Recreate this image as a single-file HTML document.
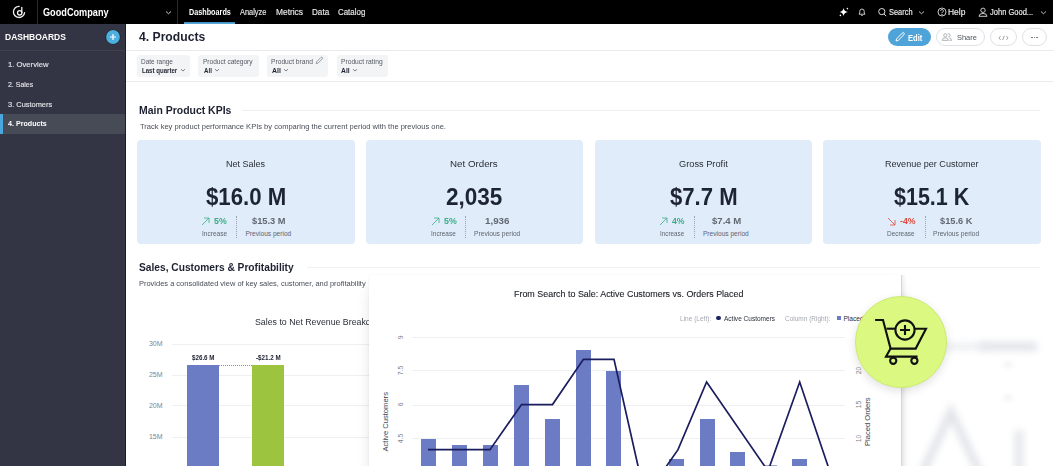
<!DOCTYPE html>
<html><head><meta charset="utf-8"><style>
html,body{margin:0;padding:0;background:#fff;}
#root{position:relative;width:1053px;height:466px;overflow:hidden;font-family:"Liberation Sans", sans-serif;}
.t{position:absolute;white-space:nowrap;line-height:1;transform-origin:0 0;}
.r{position:absolute;}
</style></head><body><div id="root">
<div class="r" style="left:0px;top:0px;width:1053px;height:24px;background:#000;"></div>
<div class="r" style="left:37px;top:0px;width:1px;height:24px;background:#2b2b2b;"></div>
<div class="r" style="left:177px;top:0px;width:1px;height:24px;background:#2b2b2b;"></div>
<svg class="r" style="left:0;top:0" width="40" height="24" viewBox="0 0 40 24" fill="none" stroke="#f2f2f2" stroke-width="1.3" stroke-linecap="round">
<path d="M19.2 6.3 A5.6 5.6 0 1 0 24.6 12.6"/><circle cx="19.7" cy="12.8" r="2.2"/><path d="M21.8 7.4 V12.4"/></svg>
<div class="t" style="left:42.93px;top:7.54px;font-size:10.00px;font-weight:700;color:#fff;transform:scaleX(0.9157);">GoodCompany</div>
<svg class="r" style="left:164.9px;top:8.5px" width="7" height="7" viewBox="0 0 7 7"><path d="M1 2.5 L3.5 4.75 L6 2.5" fill="none" stroke="#ccc" stroke-width="1"/></svg>
<div class="t" style="left:188.52px;top:8.02px;font-size:8.60px;font-weight:700;color:#fff;transform:scaleX(0.8423);">Dashboards</div>
<div class="r" style="left:184px;top:22px;width:51px;height:2px;background:linear-gradient(#3a85b8,#62b3e3);"></div>
<div class="t" style="left:239.99px;top:8.02px;font-size:8.60px;font-weight:400;color:#e8e8e8;transform:scaleX(0.8608);-webkit-text-stroke:0.15px currentColor;">Analyze</div>
<div class="t" style="left:275.91px;top:8.02px;font-size:8.60px;font-weight:400;color:#e8e8e8;transform:scaleX(0.9740);-webkit-text-stroke:0.15px currentColor;">Metrics</div>
<div class="t" style="left:311.83px;top:8.02px;font-size:8.60px;font-weight:400;color:#e8e8e8;transform:scaleX(0.9451);-webkit-text-stroke:0.15px currentColor;">Data</div>
<div class="t" style="left:338.20px;top:8.02px;font-size:8.60px;font-weight:400;color:#e8e8e8;transform:scaleX(0.9213);-webkit-text-stroke:0.15px currentColor;">Catalog</div>
<svg class="r" style="left:836px;top:4px" width="16" height="16" viewBox="836 4 16 16"><path d="M843.5 8 Q844.1 11.4 847.9 12 Q844.1 12.6 843.5 16 Q842.9 12.6 839.6 12 Q842.9 11.4 843.5 8Z" fill="#fff"/><circle cx="847.4" cy="8.6" r="0.8" fill="#fff"/><circle cx="840.4" cy="15.4" r="0.8" fill="#fff"/></svg>
<svg class="r" style="left:857px;top:7px" width="10" height="10" viewBox="0 0 10 10" fill="none" stroke="#ddd" stroke-width="0.9"><path d="M2 7.2 H8 L7.2 6 V4.2 A2.2 2.2 0 0 0 2.8 4.2 V6 Z"/><path d="M4.2 8.4 H5.8"/></svg>
<svg class="r" style="left:877px;top:7px" width="11" height="11" viewBox="0 0 11 11" fill="none" stroke="#ddd" stroke-width="1"><circle cx="4.8" cy="4.6" r="3.1"/><path d="M7 6.9 L9.2 9.2"/></svg>
<div class="t" style="left:888.96px;top:8.02px;font-size:8.60px;font-weight:400;color:#eee;transform:scaleX(0.8632);-webkit-text-stroke:0.15px currentColor;">Search</div>
<svg class="r" style="left:918.0px;top:8.5px" width="7" height="7" viewBox="0 0 7 7"><path d="M1 2.5 L3.5 4.75 L6 2.5" fill="none" stroke="#bbb" stroke-width="1"/></svg>
<svg class="r" style="left:937px;top:7px" width="10" height="10" viewBox="0 0 10 10" fill="none" stroke="#ddd" stroke-width="0.9"><circle cx="5" cy="5" r="4"/><path d="M3.6 3.9 A1.4 1.4 0 1 1 5.4 5.2 Q5 5.4 5 6.1"/><circle cx="5" cy="7.5" r="0.3" fill="#ddd"/></svg>
<div class="t" style="left:947.91px;top:8.02px;font-size:8.60px;font-weight:400;color:#eee;transform:scaleX(0.9810);-webkit-text-stroke:0.15px currentColor;">Help</div>
<svg class="r" style="left:978px;top:7px" width="10" height="10" viewBox="0 0 10 10" fill="none" stroke="#ddd" stroke-width="0.9"><circle cx="5" cy="3.3" r="2.2"/><path d="M1 9.3 Q1 6.4 5 6.4 Q9 6.4 9 9.3 Z"/></svg>
<div class="t" style="left:989.78px;top:8.02px;font-size:8.60px;font-weight:400;color:#eee;transform:scaleX(0.8755);-webkit-text-stroke:0.15px currentColor;">John Good...</div>
<svg class="r" style="left:1039.5px;top:8.5px" width="7" height="7" viewBox="0 0 7 7"><path d="M1 2.5 L3.5 4.75 L6 2.5" fill="none" stroke="#bbb" stroke-width="1"/></svg>
<div class="r" style="left:0px;top:24px;width:126px;height:442px;background:#333544;"></div>
<div class="r" style="left:0px;top:50px;width:125px;height:1px;background:#3f424c;"></div>
<div class="r" style="left:125px;top:24px;width:1px;height:442px;background:#1c1e24;"></div>
<div class="t" style="left:4.54px;top:33.24px;font-size:8.70px;font-weight:700;color:#fff;transform:scaleX(0.9766);">DASHBOARDS</div>
<svg class="r" style="left:105px;top:29px" width="16" height="16" viewBox="0 0 16 16"><circle cx="8" cy="8" r="7.6" fill="#1f222b"/><circle cx="8" cy="8" r="6.9" fill="#4eaede"/><path d="M8 5 V11 M5 8 H11" stroke="#fff" stroke-width="1.2"/></svg>
<div class="t" style="left:7.82px;top:61.11px;font-size:7.90px;font-weight:400;color:#e0e2e6;transform:scaleX(0.9726);-webkit-text-stroke:0.15px currentColor;">1. Overview</div>
<div class="t" style="left:8.05px;top:81.11px;font-size:7.90px;font-weight:400;color:#e0e2e6;transform:scaleX(0.8826);-webkit-text-stroke:0.15px currentColor;">2. Sales</div>
<div class="t" style="left:8.12px;top:100.51px;font-size:7.90px;font-weight:400;color:#e0e2e6;transform:scaleX(0.9420);-webkit-text-stroke:0.15px currentColor;">3. Customers</div>
<div class="r" style="left:0px;top:113.8px;width:125px;height:20.3px;background:#474b56;"></div>
<div class="r" style="left:0px;top:113.8px;width:3px;height:20.3px;background:#4aa6de;"></div>
<div class="t" style="left:8.30px;top:120.31px;font-size:7.90px;font-weight:700;color:#fff;transform:scaleX(0.9038);">4. Products</div>
<div class="r" style="left:126px;top:24px;width:927px;height:442px;background:#fff;"></div>
<div class="t" style="left:138.63px;top:31.16px;font-size:12.80px;font-weight:700;color:#1d2030;transform:scaleX(0.9505);">4. Products</div>
<div class="r" style="left:126px;top:50px;width:927px;height:1px;background:#e9eaee;"></div>
<div class="r" style="left:126px;top:81px;width:927px;height:1px;background:#e9eaee;"></div>
<div class="r" style="left:888px;top:28px;width:43px;height:18px;border-radius:9px;background:#4ea3d9"></div>
<svg class="r" style="left:894px;top:31px" width="12" height="12" viewBox="0 0 12 12" fill="none" stroke="#fff" stroke-width="1"><path d="M2 10 L2.6 7.8 L8.4 2 A1 1 0 0 1 10 3.6 L4.2 9.4 Z"/></svg>
<div class="t" style="left:908.20px;top:33.79px;font-size:8.40px;font-weight:700;color:#fff;transform:scaleX(0.9001);">Edit</div>
<div class="r" style="left:936px;top:28px;width:48.6px;height:18px;border-radius:9px;border:1px solid #dfe1e5;box-sizing:border-box;background:#fff"></div>
<svg class="r" style="left:940px;top:32px" width="14" height="10" viewBox="940 32 14 10" fill="none" stroke="#9a9ea6" stroke-width="0.75"><circle cx="945.3" cy="35.4" r="1.6"/><path d="M942.3 40.4 Q942.3 37.8 945.3 37.8 Q948.3 37.8 948.3 40.4 Z"/><path d="M947.6 34 A1.6 1.6 0 1 1 948.2 36.9 M949.2 38 Q951.5 38.4 951.5 40.4 H949.6"/></svg>
<div class="t" style="left:956.56px;top:34.33px;font-size:8.00px;font-weight:400;color:#4d525b;transform:scaleX(0.9310);">Share</div>
<div class="r" style="left:990px;top:28px;width:27px;height:18px;border-radius:9px;border:1px solid #dfe1e5;box-sizing:border-box;background:#fff"></div>
<svg class="r" style="left:996px;top:33px" width="14" height="8" viewBox="996 33 14 8" fill="none" stroke="#7d828b" stroke-width="0.75"><path d="M1000.6 36 L999 37.9 L1000.6 39.8 M1006.4 36 L1008 37.9 L1006.4 39.8 M1004.3 35.8 L1002.7 40"/></svg>
<div class="r" style="left:1022px;top:28px;width:25px;height:18px;border-radius:9px;border:1px solid #dfe1e5;box-sizing:border-box;background:#fff"></div>
<div class="r" style="left:1031.2px;top:36.9px;width:1.5px;height:1.5px;border-radius:1px;background:#666"></div>
<div class="r" style="left:1033.8px;top:36.9px;width:1.5px;height:1.5px;border-radius:1px;background:#666"></div>
<div class="r" style="left:1036.3999999999999px;top:36.9px;width:1.5px;height:1.5px;border-radius:1px;background:#666"></div>
<div class="r" style="left:137.3px;top:54.7px;width:53.1px;height:22px;border-radius:3px;background:#f3f4f6"></div>
<div class="r" style="left:198px;top:54.7px;width:60.5px;height:22px;border-radius:3px;background:#f3f4f6"></div>
<div class="r" style="left:267.3px;top:54.7px;width:60.5px;height:22px;border-radius:3px;background:#f3f4f6"></div>
<div class="r" style="left:337px;top:54.7px;width:50.7px;height:22px;border-radius:3px;background:#f3f4f6"></div>
<div class="t" style="left:141.37px;top:58.78px;font-size:6.40px;font-weight:400;color:#535862;transform:scaleX(1.0110);">Date range</div>
<div class="t" style="left:141.50px;top:67.78px;font-size:6.40px;font-weight:700;color:#1f2330;transform:scaleX(0.9543);">Last quarter</div>
<svg class="r" style="left:180.4px;top:66.7px" width="6" height="6" viewBox="0 0 6 6"><path d="M1 2.2 L3.0 4.0 L5 2.2" fill="none" stroke="#666" stroke-width="0.8"/></svg>
<div class="t" style="left:203.16px;top:58.78px;font-size:6.40px;font-weight:400;color:#535862;transform:scaleX(1.0262);">Product category</div>
<div class="t" style="left:203.54px;top:67.78px;font-size:6.40px;font-weight:700;color:#1f2330;transform:scaleX(0.9650);">All</div>
<svg class="r" style="left:214.4px;top:66.7px" width="6" height="6" viewBox="0 0 6 6"><path d="M1 2.2 L3.0 4.0 L5 2.2" fill="none" stroke="#666" stroke-width="0.8"/></svg>
<div class="t" style="left:271.45px;top:58.78px;font-size:6.40px;font-weight:400;color:#535862;transform:scaleX(1.0440);">Product brand</div>
<svg class="r" style="left:314px;top:55px" width="10" height="10" viewBox="314 55 10 10" fill="none" stroke="#7a7f88" stroke-width="0.75"><path d="M316.2 63.6 L316.6 61.8 L320.9 57.5 A0.95 0.95 0 0 1 322.3 58.9 L318 63.2 Z"/></svg>
<div class="t" style="left:271.82px;top:67.78px;font-size:6.40px;font-weight:700;color:#1f2330;transform:scaleX(1.0840);">All</div>
<svg class="r" style="left:282.8px;top:66.7px" width="6" height="6" viewBox="0 0 6 6"><path d="M1 2.2 L3.0 4.0 L5 2.2" fill="none" stroke="#666" stroke-width="0.8"/></svg>
<div class="t" style="left:340.85px;top:58.78px;font-size:6.40px;font-weight:400;color:#535862;transform:scaleX(1.0459);">Product rating</div>
<div class="t" style="left:341.22px;top:67.78px;font-size:6.40px;font-weight:700;color:#1f2330;transform:scaleX(1.0575);">All</div>
<svg class="r" style="left:352.0px;top:66.7px" width="6" height="6" viewBox="0 0 6 6"><path d="M1 2.2 L3.0 4.0 L5 2.2" fill="none" stroke="#666" stroke-width="0.8"/></svg>
<div class="t" style="left:139.01px;top:104.93px;font-size:10.60px;font-weight:700;color:#1d2030;transform:scaleX(0.9868);">Main Product KPIs</div>
<div class="r" style="left:242px;top:110px;width:798px;height:1px;background:#eceef1;"></div>
<div class="t" style="left:139.53px;top:122.81px;font-size:7.20px;font-weight:400;color:#484d57;transform:scaleX(1.0485);">Track key product performance KPIs by comparing the current period with the previous one.</div>
<div class="r" style="left:137px;top:140px;width:218px;height:103.5px;border-radius:4px;background:#e0ecf9"></div>
<div class="t" style="left:226.16px;top:160.31px;font-size:9.20px;font-weight:400;color:#2a2e37;transform:scaleX(0.9792);">Net Sales</div>
<div class="t" style="left:205.99px;top:185.56px;font-size:23.20px;font-weight:700;color:#1d2433;transform:scaleX(0.9592);">$16.0 M</div>
<div class="t" style="left:214.44px;top:217.21px;font-size:9.20px;font-weight:700;color:#37ad86;transform:scaleX(0.9554);">5%</div>
<svg class="r" style="left:201.3px;top:216.6px" width="9" height="9" viewBox="0 0 9 9" fill="none" stroke="#37ad86" stroke-width="0.8"><path d="M1 8 L8 1 M3 1 H8 V6"/></svg>
<div class="t" style="left:202.10px;top:230.61px;font-size:6.60px;font-weight:400;color:#5f6570;transform:scaleX(0.9910);">Increase</div>
<div class="r" style="left:236.20000000000002px;top:215.5px;width:0;height:22.5px;border-left:1px dotted #9aa3ae"></div>
<div class="t" style="left:251.87px;top:217.01px;font-size:9.20px;font-weight:700;color:#626873;transform:scaleX(1.0094);">$15.3 M</div>
<div class="t" style="left:245.46px;top:230.61px;font-size:6.60px;font-weight:400;color:#5f6570;">Previous period</div>
<div class="r" style="left:366px;top:140px;width:217px;height:103.5px;border-radius:4px;background:#e0ecf9"></div>
<div class="t" style="left:450.20px;top:160.31px;font-size:9.20px;font-weight:400;color:#2a2e37;transform:scaleX(1.0614);">Net Orders</div>
<div class="t" style="left:445.83px;top:185.56px;font-size:23.20px;font-weight:700;color:#1d2433;transform:scaleX(0.9716);">2,035</div>
<div class="t" style="left:444.04px;top:217.21px;font-size:9.20px;font-weight:700;color:#37ad86;transform:scaleX(0.9554);">5%</div>
<svg class="r" style="left:430.7px;top:216.6px" width="9" height="9" viewBox="0 0 9 9" fill="none" stroke="#37ad86" stroke-width="0.8"><path d="M1 8 L8 1 M3 1 H8 V6"/></svg>
<div class="t" style="left:431.06px;top:230.61px;font-size:6.60px;font-weight:400;color:#5f6570;transform:scaleX(0.9787);">Increase</div>
<div class="r" style="left:465.3px;top:215.5px;width:0;height:22.5px;border-left:1px dotted #9aa3ae"></div>
<div class="t" style="left:485.14px;top:217.01px;font-size:9.20px;font-weight:700;color:#626873;transform:scaleX(1.0625);">1,936</div>
<div class="t" style="left:474.05px;top:230.61px;font-size:6.60px;font-weight:400;color:#5f6570;transform:scaleX(1.0113);">Previous period</div>
<div class="r" style="left:595px;top:140px;width:217px;height:103.5px;border-radius:4px;background:#e0ecf9"></div>
<div class="t" style="left:678.79px;top:160.31px;font-size:9.20px;font-weight:400;color:#2a2e37;transform:scaleX(1.0054);">Gross Profit</div>
<div class="t" style="left:670.14px;top:185.56px;font-size:23.20px;font-weight:700;color:#1d2433;transform:scaleX(0.9545);">$7.7 M</div>
<div class="t" style="left:672.18px;top:217.21px;font-size:9.20px;font-weight:700;color:#37ad86;transform:scaleX(0.9445);">4%</div>
<svg class="r" style="left:658.5px;top:216.6px" width="9" height="9" viewBox="0 0 9 9" fill="none" stroke="#37ad86" stroke-width="0.8"><path d="M1 8 L8 1 M3 1 H8 V6"/></svg>
<div class="t" style="left:659.77px;top:230.61px;font-size:6.60px;font-weight:400;color:#5f6570;transform:scaleX(0.9541);">Increase</div>
<div class="r" style="left:694.3px;top:215.5px;width:0;height:22.5px;border-left:1px dotted #9aa3ae"></div>
<div class="t" style="left:711.67px;top:217.01px;font-size:9.20px;font-weight:700;color:#626873;transform:scaleX(1.0446);">$7.4 M</div>
<div class="t" style="left:702.96px;top:230.61px;font-size:6.60px;font-weight:400;color:#5f6570;">Previous period</div>
<div class="r" style="left:823px;top:140px;width:218px;height:103.5px;border-radius:4px;background:#e0ecf9"></div>
<div class="t" style="left:884.76px;top:160.31px;font-size:9.20px;font-weight:400;color:#2a2e37;transform:scaleX(0.9851);">Revenue per Customer</div>
<div class="t" style="left:894.40px;top:185.56px;font-size:23.20px;font-weight:700;color:#1d2433;transform:scaleX(0.9270);">$15.1 K</div>
<div class="t" style="left:900.07px;top:217.21px;font-size:9.20px;font-weight:700;color:#dc4a3d;transform:scaleX(0.9512);">-4%</div>
<svg class="r" style="left:886.7px;top:216.6px" width="9" height="9" viewBox="0 0 9 9" fill="none" stroke="#dc4a3d" stroke-width="0.8"><path d="M1 1 L8 8 M8 3 V8 H3"/></svg>
<div class="t" style="left:887.17px;top:230.61px;font-size:6.60px;font-weight:400;color:#5f6570;transform:scaleX(0.9775);">Decrease</div>
<div class="r" style="left:925.1999999999999px;top:215.5px;width:0;height:22.5px;border-left:1px dotted #9aa3ae"></div>
<div class="t" style="left:940.32px;top:217.01px;font-size:9.20px;font-weight:700;color:#626873;transform:scaleX(1.0032);">$15.6 K</div>
<div class="t" style="left:933.30px;top:230.61px;font-size:6.60px;font-weight:400;color:#5f6570;transform:scaleX(1.0091);">Previous period</div>
<div class="t" style="left:139.29px;top:261.63px;font-size:10.60px;font-weight:700;color:#1d2030;transform:scaleX(0.9625);">Sales, Customers &amp; Profitability</div>
<div class="r" style="left:307px;top:266.5px;width:733px;height:1px;background:#eef0f2;"></div>
<div class="t" style="left:138.99px;top:279.81px;font-size:7.20px;font-weight:400;color:#484d57;transform:scaleX(1.0390);">Provides a consolidated view of key sales, customer, and profitability</div>
<div class="t" style="left:254.50px;top:317.71px;font-size:9.20px;font-weight:400;color:#2a2e37;transform:scaleX(0.9558);">Sales to Net Revenue Breakdown</div>
<div class="r" style="left:172px;top:343.7px;width:200px;height:1px;background:#eeeff2;"></div>
<div class="t" style="left:148.95px;top:340.37px;font-size:7.00px;font-weight:400;color:#7f848d;">30M</div>
<div class="r" style="left:172px;top:374.6px;width:200px;height:1px;background:#eeeff2;"></div>
<div class="t" style="left:148.95px;top:371.27px;font-size:7.00px;font-weight:400;color:#7f848d;">25M</div>
<div class="r" style="left:172px;top:405.3px;width:200px;height:1px;background:#eeeff2;"></div>
<div class="t" style="left:148.95px;top:401.97px;font-size:7.00px;font-weight:400;color:#7f848d;">20M</div>
<div class="r" style="left:172px;top:436.5px;width:200px;height:1px;background:#eeeff2;"></div>
<div class="t" style="left:148.95px;top:433.17px;font-size:7.00px;font-weight:400;color:#7f848d;">15M</div>
<div class="r" style="left:186.7px;top:365px;width:32.1px;height:101px;background:#6b7bc4;"></div>
<div class="r" style="left:252px;top:365px;width:31.8px;height:101px;background:#9dc43f;"></div>
<div class="r" style="left:219px;top:364.5px;width:33px;height:0;border-top:1px dotted #8d929b"></div>
<div class="t" style="left:191.91px;top:355.18px;font-size:6.40px;font-weight:700;color:#1d2030;transform:scaleX(0.9732);">$26.6 M</div>
<div class="t" style="left:255.76px;top:355.18px;font-size:6.40px;font-weight:700;color:#1d2030;transform:scaleX(0.9761);">-$21.2 M</div>
<div class="r" style="left:369px;top:275px;width:532px;height:200px;background:#fff;box-shadow:0 10px 14px -3px rgba(0,0,0,0.16), 0 0 1px rgba(0,0,0,0.10)"></div>
<div class="t" style="left:514.07px;top:289.61px;font-size:9.20px;font-weight:400;color:#1c1f27;transform:scaleX(0.9703);-webkit-text-stroke:0.12px currentColor;">From Search to Sale: Active Customers vs. Orders Placed</div>
<div class="t" style="left:679.86px;top:315.51px;font-size:6.60px;font-weight:400;color:#a3a8b0;transform:scaleX(0.9901);">Line (Left):</div>
<div class="r" style="left:716px;top:315.7px;width:4.6px;height:4.6px;border-radius:50%;background:#1d2260"></div>
<div class="t" style="left:723.79px;top:315.51px;font-size:6.60px;font-weight:400;color:#2a2f3a;transform:scaleX(0.9890);">Active Customers</div>
<div class="t" style="left:785.38px;top:315.51px;font-size:6.60px;font-weight:400;color:#a3a8b0;transform:scaleX(0.9829);">Column (Right):</div>
<div class="r" style="left:836.5px;top:315.5px;width:4.5px;height:4.5px;background:#6b7bc4;"></div>
<div class="t" style="left:843.46px;top:315.51px;font-size:6.60px;font-weight:400;color:#2a2f3a;">Placed Orders</div>
<div class="r" style="left:412px;top:337.3px;width:433px;height:1px;background:#eeeff2;"></div>
<div class="r" style="left:412px;top:370.3px;width:433px;height:1px;background:#eeeff2;"></div>
<div class="r" style="left:412px;top:404.5px;width:433px;height:1px;background:#eeeff2;"></div>
<div class="r" style="left:412px;top:438.3px;width:433px;height:1px;background:#eeeff2;"></div>
<div class="r" style="left:764px;top:465px;width:13px;height:10px;background:#a3a8c8;"></div>
<div class="t" style="left:350.5px;top:333.90px;width:100px;text-align:center;font-size:6.8px;font-weight:400;color:#7f848d;transform-origin:50% 50%;transform:rotate(-90deg)">9</div>
<div class="t" style="left:350.5px;top:366.90px;width:100px;text-align:center;font-size:6.8px;font-weight:400;color:#7f848d;transform-origin:50% 50%;transform:rotate(-90deg)">7.5</div>
<div class="t" style="left:350.5px;top:401.10px;width:100px;text-align:center;font-size:6.8px;font-weight:400;color:#7f848d;transform-origin:50% 50%;transform:rotate(-90deg)">6</div>
<div class="t" style="left:350.5px;top:434.90px;width:100px;text-align:center;font-size:6.8px;font-weight:400;color:#7f848d;transform-origin:50% 50%;transform:rotate(-90deg)">4.5</div>
<div class="t" style="left:808.6px;top:366.90px;width:100px;text-align:center;font-size:6.8px;font-weight:400;color:#7f848d;transform-origin:50% 50%;transform:rotate(-90deg)">20</div>
<div class="t" style="left:808.6px;top:401.10px;width:100px;text-align:center;font-size:6.8px;font-weight:400;color:#7f848d;transform-origin:50% 50%;transform:rotate(-90deg)">15</div>
<div class="t" style="left:808.6px;top:434.90px;width:100px;text-align:center;font-size:6.8px;font-weight:400;color:#7f848d;transform-origin:50% 50%;transform:rotate(-90deg)">10</div>
<div class="t" style="left:335.7px;top:417.70px;width:100px;text-align:center;font-size:7.6px;font-weight:400;color:#3f444e;transform-origin:50% 50%;transform:rotate(-90deg)">Active Customers</div>
<div class="t" style="left:818.3px;top:417.90px;width:100px;text-align:center;font-size:7.6px;font-weight:400;color:#3f444e;transform-origin:50% 50%;transform:rotate(-90deg)">Placed Orders</div>
<div class="r" style="left:420.5px;top:439px;width:15px;height:37px;background:#6b7bc4;"></div>
<div class="r" style="left:452.3px;top:445px;width:15px;height:31px;background:#6b7bc4;"></div>
<div class="r" style="left:482.9px;top:445px;width:15px;height:31px;background:#6b7bc4;"></div>
<div class="r" style="left:514px;top:384.6px;width:15px;height:91.39999999999998px;background:#6b7bc4;"></div>
<div class="r" style="left:544.9px;top:418.8px;width:15px;height:57.19999999999999px;background:#6b7bc4;"></div>
<div class="r" style="left:576px;top:350.4px;width:15px;height:125.60000000000002px;background:#6b7bc4;"></div>
<div class="r" style="left:606.1px;top:370.9px;width:15px;height:105.10000000000002px;background:#6b7bc4;"></div>
<div class="r" style="left:668.6px;top:459px;width:15px;height:17px;background:#6b7bc4;"></div>
<div class="r" style="left:699.6px;top:418.5px;width:15px;height:57.5px;background:#6b7bc4;"></div>
<div class="r" style="left:730.2px;top:452.4px;width:15px;height:23.600000000000023px;background:#6b7bc4;"></div>
<div class="r" style="left:792px;top:459.2px;width:15px;height:16.80000000000001px;background:#6b7bc4;"></div>
<svg class="r" style="left:0;top:0" width="1053" height="466" viewBox="0 0 1053 466"><path d="M428,449.7 L459,449.7 L490,449.7 L521.5,404.6 L552.5,404.6 L583.4,359.3 L614,359.3 L645,497 L678,449.7 L706.6,382 L768,471 L799.7,382 L830,472" fill="none" stroke="#1b1e5e" stroke-width="1.7" stroke-linejoin="miter"/></svg>
<div class="r" style="left:901px;top:275px;width:1px;height:191px;background:#d6d7da"></div>
<div class="r" style="left:902px;top:275px;width:5px;height:191px;background:linear-gradient(to right, rgba(0,0,0,0.06), rgba(0,0,0,0))"></div>
<div class="r" style="left:940px;top:343px;width:45px;height:7px;background:#eeeff2;filter:blur(3.5px)"></div>
<div class="r" style="left:980px;top:342px;width:57px;height:9px;background:#e2e4e9;filter:blur(3.5px)"></div>
<div class="r" style="left:1004px;top:362px;width:8px;height:5px;background:#eef0f3;filter:blur(2.5px)"></div>
<div class="r" style="left:1004px;top:395px;width:8px;height:5px;background:#eef0f3;filter:blur(2.5px)"></div>
<svg class="r" style="left:880px;top:370px;filter:blur(3.5px)" width="173" height="110" viewBox="880 370 173 110"><path d="M919 480 L951 412 L983 480" fill="none" stroke="#e2e4ea" stroke-width="8"/><path d="M1019 430 V480" stroke="#e6e8ec" stroke-width="9"/></svg>
<div class="r" style="left:855px;top:296px;width:92px;height:92px;border-radius:50%;background:#dbf981;border:1px solid #cdea72;box-sizing:border-box;box-shadow:0 3px 10px rgba(0,0,0,0.12)"></div>
<svg class="r" style="left:850px;top:290px" width="105" height="105" viewBox="850 290 105 105" fill="none" stroke="#111" stroke-width="2.1" stroke-linecap="butt" stroke-linejoin="miter">
<path d="M875.1 320 H883 L890.6 348.6 H915.7 L926 328.7 H915"/>
<path d="M886.5 328.7 H895.5"/>
<path d="M890.6 348.6 L886 356.6 H917.6"/>
<circle cx="893.2" cy="360.8" r="3.1"/><circle cx="914.4" cy="360.8" r="3.1"/>
<circle cx="905" cy="330" r="9.6"/>
<path d="M905 325 V335 M900 330 H910"/>
</svg>
</div></body></html>
